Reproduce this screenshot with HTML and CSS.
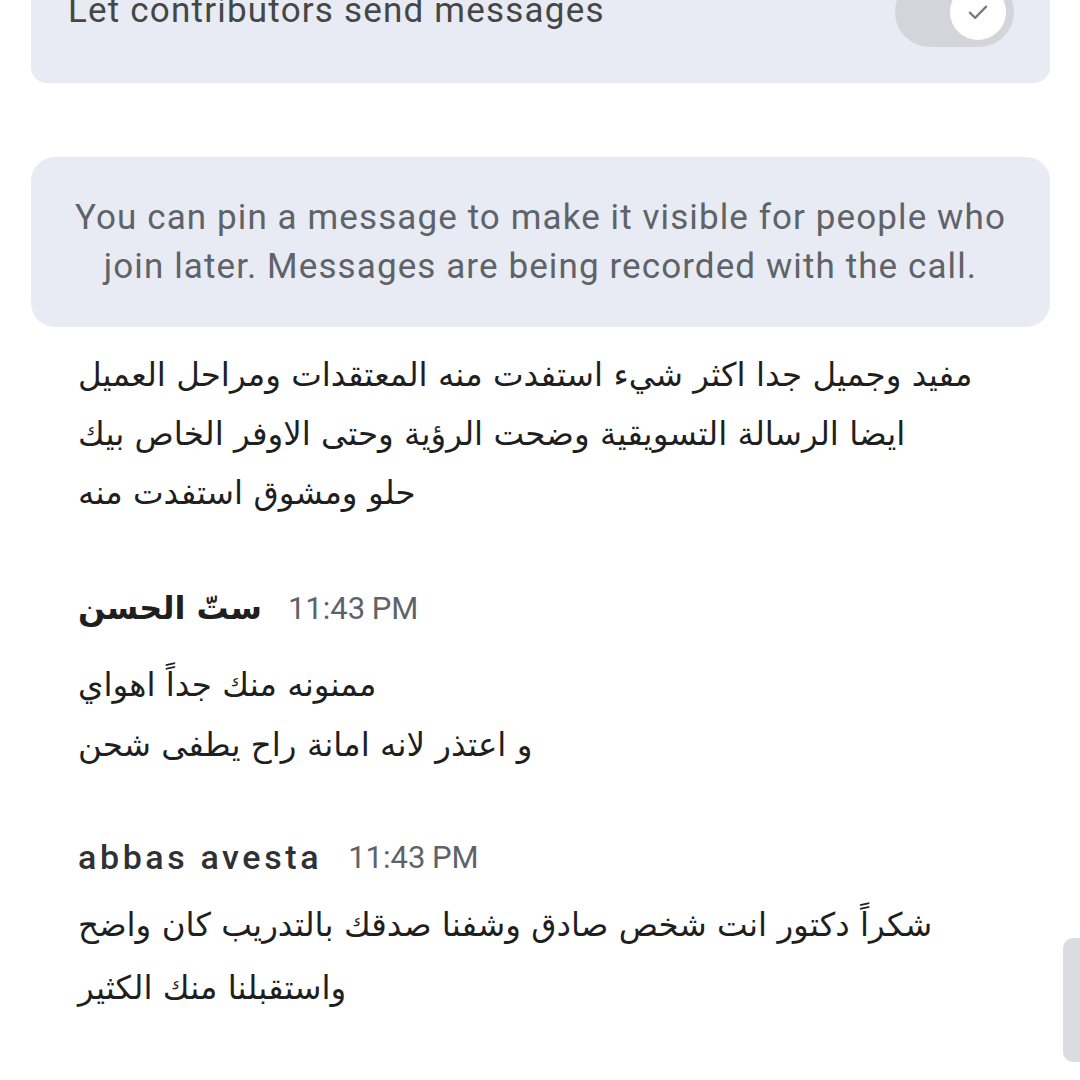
FILE: index.html
```html
<!DOCTYPE html>
<html lang="en">
<head>
<meta charset="utf-8">
<link rel="stylesheet" href="styles.css">
</head>
<body>
<div class="page">
  <section class="card setting">
    <div class="setting-row">
      <span class="setting-label">Let contributors send messages</span>
      <span class="switch">
        <span class="knob">
          <svg viewBox="0 0 24 24" width="30" height="30"><path d="M5.5 12.5l4.2 4.2 8.8-9" fill="none" stroke="#7a7c80" stroke-width="1.8" stroke-linecap="round" stroke-linejoin="round"/></svg>
        </span>
      </span>
    </div>
  </section>

  <section class="card info">
    <p>You can pin a message to make it visible for people who<br>join later. Messages are being recorded with the call.</p>
  </section>

  <div class="messages">
    <div class="msg first">
      <p class="ar l59" dir="rtl">مفيد وجميل جدا اكثر شيء استفدت منه المعتقدات ومراحل العميل</p>
      <p class="ar l59" dir="rtl">ايضا الرسالة التسويقية وضحت الرؤية وحتى الاوفر الخاص بيك</p>
      <p class="ar l59" dir="rtl">حلو ومشوق استفدت منه</p>
    </div>

    <div class="msg second">
      <div class="head"><bdi class="name ar-name" dir="rtl">ستّ الحسن</bdi><span class="time">11:43 PM</span></div>
      <div class="body b2">
        <p class="ar l60" dir="rtl">ممنونه منك جداً اهواي</p>
        <p class="ar l60" dir="rtl">و اعتذر لانه امانة راح يطفى شحن</p>
      </div>
    </div>

    <div class="msg third">
      <div class="head"><span class="name latin-name">abbas avesta</span><span class="time">11:43 PM</span></div>
      <div class="body b3">
        <p class="ar l63" dir="rtl">شكراً دكتور انت شخص صادق وشفنا صدقك بالتدريب كان واضح</p>
        <p class="ar l63" dir="rtl">واستقبلنا منك الكثير</p>
      </div>
    </div>
  </div>
</div>
<div class="scrollbar"></div>
</body>
</html>
```

FILE: styles.css
```css
html, body {
  margin: 0;
  padding: 0;
  background: #ffffff;
  width: 1080px;
  height: 1080px;
  overflow: hidden;
}

body {
  font-family: Roboto, "Open Sans", "DejaVu Sans", sans-serif;
  position: relative;
}

.page {
  padding: 0 30px 0 31px;
}

.card {
  background: #e8ebf3;
}

.setting {
  margin-top: -40px;
  border-radius: 0 0 16px 16px;
  padding: 0 36px 19px 37px;
}

.setting-row {
  height: 104px;
  display: flex;
  align-items: center;
  justify-content: space-between;
}

.setting-label {
  font-size: 35px;
  color: #444746;
  letter-spacing: 1.2px;
  margin-top: -4px;
}

.switch {
  width: 119px;
  height: 70px;
  border-radius: 35px;
  background: #d3d5da;
  display: flex;
  align-items: center;
  justify-content: flex-end;
  padding-right: 8px;
  box-sizing: border-box;
}

.knob {
  width: 56px;
  height: 56px;
  border-radius: 50%;
  background: #ffffff;
  display: flex;
  align-items: center;
  justify-content: center;
}

.info {
  margin-top: 74px;
  border-radius: 24px;
  height: 170px;
  display: flex;
  align-items: center;
  justify-content: center;
}

.info p {
  margin: 0;
  font-size: 35px;
  line-height: 49px;
  color: #5f6368;
  text-align: center;
  letter-spacing: 1.1px;
}

.messages {
  overflow: hidden;
  margin-top: 34px;
  padding-left: 47px;
  height: 720px;
}

.msg p {
  margin: 0;
}

.ar {
  font-family: "DejaVu Sans", "Noto Sans", sans-serif;
  font-size: 32.5px;
  color: #1f1f1f;
  text-align: left;
}

.l59 { line-height: 59px; }
.l60 { line-height: 60px; }
.l63 { line-height: 63px; }

.first {
  margin-top: -15px;
}

.head {
  height: 50px;
  display: flex;
  align-items: center;
  gap: 26px;
}

.name {
  font-size: 32px;
  font-weight: 500;
  color: #1f1f1f;
}

.latin-name {
  font-size: 34px;
  letter-spacing: 3.6px;
  color: #303134;
}

.ar-name {
  font-family: "DejaVu Sans", sans-serif;
  font-weight: 700;
  font-size: 32px;
}

.time {
  font-size: 31px;
  color: #5f6368;
  word-spacing: -1px;
}

.second {
  margin-top: 60px;
}

.b2 {
  margin-top: 22px;
}

.third {
  margin-top: 57px;
}

.b3 {
  margin-top: 12px;
}

.scrollbar {
  position: absolute;
  right: 0;
  top: 938px;
  width: 17px;
  height: 124px;
  background: #dadce0;
  border-radius: 10px 0 0 10px;
}
```
